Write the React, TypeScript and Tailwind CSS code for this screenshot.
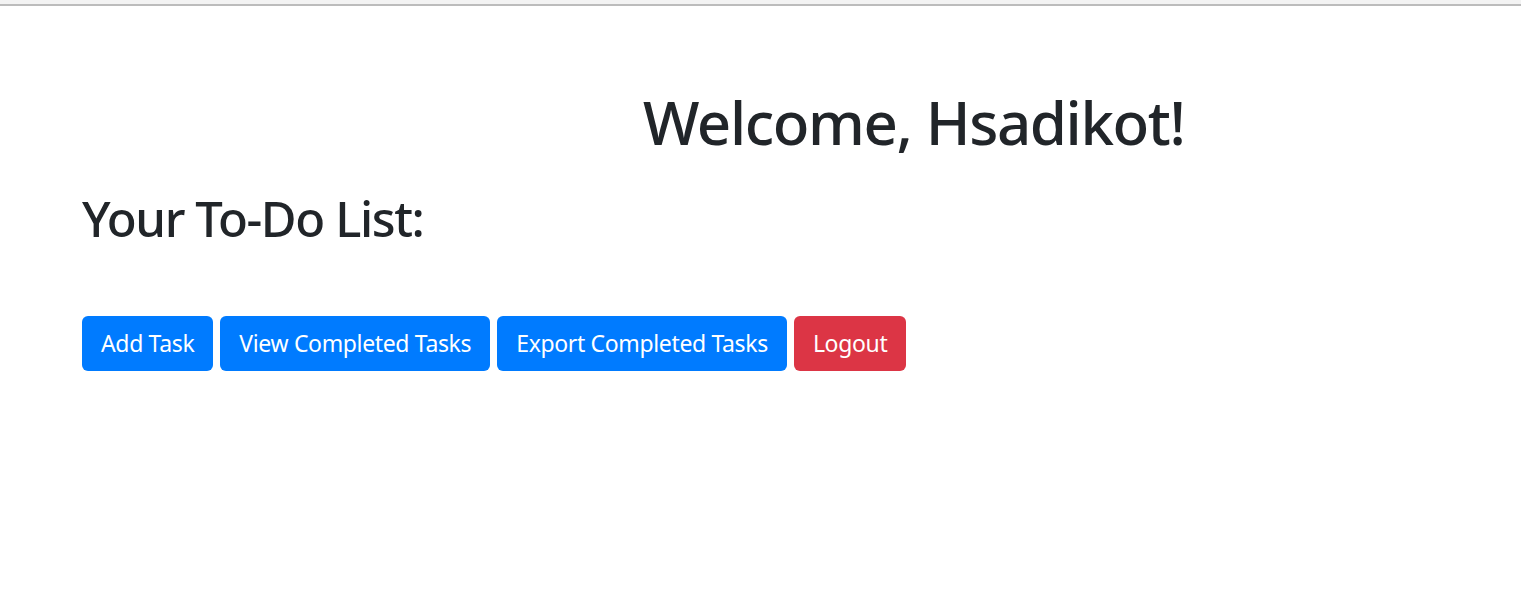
import React from 'react';

const buttons = [
  { label: 'Add Task', color: 'bg-[#007bff]' },
  { label: 'View Completed Tasks', color: 'bg-[#007bff]' },
  { label: 'Export Completed Tasks', color: 'bg-[#007bff]' },
  { label: 'Logout', color: 'bg-[#dc3545]' },
];

const App: React.FC = () => {
  return (
    <div className="min-h-[609px] bg-white text-[#212529] font-['Noto_Sans','Open_Sans',sans-serif]">
      {/* browser edge */}
      <div className="h-[4px] bg-[#f3f3f3]" />
      <div className="h-[2px] bg-[#bcbcbc]" />

      <div className="pl-[82px] pt-[76px]">
        <h1 className="pl-[561px] text-[60px] leading-[80px] font-medium tracking-[-1.4px]">
          Welcome, Hsadikot!
        </h1>

        <h2 className="mt-[26px] text-[49px] leading-[60px] font-medium tracking-[-1.4px]">
          Your To-Do List:
        </h2>

        <div className="mt-[68px] flex gap-[7px]">
          {buttons.map((b) => (
            <button
              key={b.label}
              className={`${b.color} h-[55px] px-[19px] rounded-[6px] text-white text-[23px] leading-none tracking-[-0.35px]`}
            >
              {b.label}
            </button>
          ))}
        </div>
      </div>
    </div>
  );
};

export default App;
